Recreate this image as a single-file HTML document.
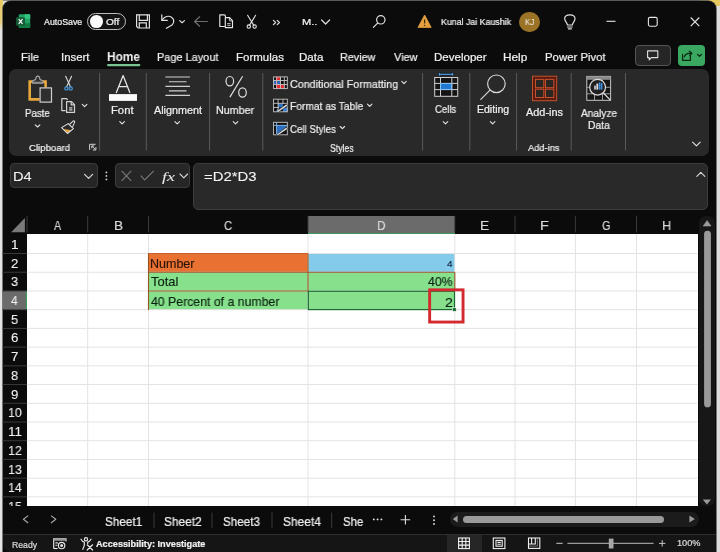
<!DOCTYPE html>
<html><head><meta charset="utf-8"><style>
html,body{margin:0;padding:0}
body{width:720px;height:552px;overflow:hidden;position:relative;background:#dedede;font-family:"Liberation Sans",sans-serif}
.a{position:absolute}
.t{position:absolute;white-space:nowrap;transform-origin:0 0;will-change:transform}
svg{position:absolute;overflow:visible}
</style></head><body>
<div class="a" style="left:0;top:0;width:720px;height:1px;background:#8a8a82"></div>
<div class="a" style="left:700px;top:0;width:20px;height:6px;background:#e8c860"></div>
<div class="a" style="left:0;top:0;width:2.5px;height:552px;background:linear-gradient(#e8c860 0px,#e8d080 22px,#e4e4e4 30px,#e4e4e4 552px)"></div>
<div class="a" style="left:2.5px;top:1px;width:713px;height:570px;background:#0b0b0b;border-radius:8px;box-shadow:0 0 0 0.7px #4a4a4a"></div>
<!-- ribbon panel -->
<div class="a" style="left:9px;top:68.5px;width:699.5px;height:87px;background:#292929;border-radius:7px"></div>
<!-- toggle -->
<div class="a" style="left:87.3px;top:13.1px;width:38.7px;height:17px;box-sizing:border-box;border:1.3px solid #bdbdbd;border-radius:9px;background:#141414"></div>
<div class="a" style="left:90px;top:15.1px;width:12.6px;height:12.6px;border-radius:50%;background:#fafafa"></div>
<!-- avatar -->
<div class="a" style="left:519.3px;top:11.6px;width:20.8px;height:20.8px;border-radius:50%;background:#9b7326"></div>
<!-- comment & share buttons -->
<div class="a" style="left:635px;top:45.2px;width:35.8px;height:20.6px;box-sizing:border-box;border:1px solid #555;border-radius:4px;background:#262626"></div>
<div class="a" style="left:678px;top:45.1px;width:27.3px;height:20.7px;border-radius:4px;background:#3aa860"></div>
<!-- formula bar -->
<div class="a" style="left:9.5px;top:163.3px;width:88.3px;height:24.5px;background:#262626;border:1px solid #3c3c3c;border-radius:4px;box-sizing:border-box"></div>
<div class="a" style="left:115.3px;top:163.3px;width:74.5px;height:24.5px;background:#262626;border:1px solid #3c3c3c;border-radius:4px;box-sizing:border-box"></div>
<div class="a" style="left:193.2px;top:163.4px;width:515px;height:46.2px;background:#292929;border:1px solid #3c3c3c;border-radius:5px;box-sizing:border-box"></div>
<!-- grid -->
<div class="a" style="left:699.4px;top:216px;width:15.2px;height:290px;background:#171717;border-radius:7px"></div>
<div class="a" style="left:27px;top:234px;width:670.6px;height:272px;background:#fff"></div>
<!-- column header selected -->
<div class="a" style="left:308px;top:215.8px;width:146.8px;height:18.4px;background:#6b6b6b"></div>
<div class="a" style="left:2.5px;top:290.96px;width:24.50px;height:18.72px;background:#6b6b6b"></div>
<div class="a" style="left:148.5px;top:253.52px;width:159.50px;height:18.72px;background:#E97132"></div>
<div class="a" style="left:308px;top:253.52px;width:146.80px;height:18.72px;background:#83CAEB"></div>
<div class="a" style="left:148.5px;top:272.24px;width:306.30px;height:37.44px;background:#86E08C"></div>

<!-- sheet bar & status bar -->
<div class="a" style="left:2.5px;top:506.1px;width:713px;height:28.1px;background:#0b0b0b"></div>
<div class="a" style="left:2.5px;top:534.2px;width:713px;height:18px;background:#151515;border-top:1px solid #2e2e2e;box-sizing:border-box;border-bottom-left-radius:8px"></div>
<div class="a" style="left:447px;top:535px;width:34.8px;height:17px;background:#262626"></div>
<div class="a" style="left:449.7px;top:511.7px;width:249px;height:15.5px;border-radius:8px;background:#1b1b1b"></div>
<div class="a" style="left:462.6px;top:515.5px;width:201.9px;height:7.1px;border-radius:3.6px;background:#9a9a9a"></div>
<svg width="720" height="552" style="left:0;top:0" viewBox="0 0 720 552">
<!-- excel icon -->
<rect x="18.7" y="14.3" width="11.5" height="13.6" rx="1.3" fill="#21a366"/>
<rect x="24.5" y="14.3" width="5.7" height="4.5" fill="#33c481"/>
<rect x="18.7" y="23.2" width="11.5" height="4.7" rx="1" fill="#107c41"/>
<rect x="16.1" y="17.2" width="8.9" height="8.6" rx="1" fill="#185c37"/>
<path d="M18.7 19.2 L22.5 23.8 M22.5 19.2 L18.7 23.8" stroke="#fff" stroke-width="1.2"/>
<!-- save -->
<g fill="none" stroke="#e0e0e0" stroke-width="1.2">
<path d="M136.6 14.8 H149.4 V28 H138.2 L136.6 26.4 Z"/>
<path d="M139.3 14.8 V20.3 H147.4 V14.8"/>
<path d="M139.3 28 V22.8 H146.3 V28"/>
</g>
<!-- undo -->
<g fill="none" stroke="#e0e0e0" stroke-width="1.2" stroke-linecap="round" stroke-linejoin="round">
<path d="M161.8 14.9 V20.4 H167.3"/>
<path d="M162.2 20 C164.5 16.5 168.5 15.2 171.5 17.2 C174.5 19.5 174.3 22.8 172 25 L166.4 28.3"/>
<path d="M179.7 20.6 L182.1 22.7 L184.5 20.6"/>
</g>
<!-- back arrow -->
<path d="M194.6 21.5 H207.4 M199.6 16.8 L194.6 21.5 L199.6 26.2" fill="none" stroke="#6e6e6e" stroke-width="1.2" stroke-linecap="round" stroke-linejoin="round"/>
<!-- copy -->
<g fill="none" stroke="#e6e6e6" stroke-width="1.15" stroke-linejoin="round">
<path d="M224.9 26.5 H219.8 V14.9 H224.2 C225 14.9 225.4 15.4 225.4 16.2 V17"/>
<path d="M225.3 17.6 H229.6 L232.5 20.6 V27.6 H225.3 Z"/>
<path d="M229.4 17.8 V20.3 C229.4 20.7 229.7 20.9 230.1 20.9 H232.3" stroke-width="0.9"/>
</g>
<path d="M227.2 23.6 H230.6 M227.2 25.3 H230.6" stroke="#e6e6e6" stroke-width="0.85"/>
<!-- scissors -->
<g fill="none" stroke="#e0e0e0" stroke-width="1.1" stroke-linecap="round">
<path d="M247.6 15.3 L253.8 25.4 M255.6 15.3 L249.4 25.4"/>
<circle cx="248.8" cy="26.6" r="1.7"/><circle cx="254.6" cy="26.6" r="1.7"/>
</g>
<!-- >> -->
<path d="M273.4 20.4 L275.6 22.5 L273.4 24.6 M277.2 20.4 L279.4 22.5 L277.2 24.6" fill="none" stroke="#e0e0e0" stroke-width="1.2" stroke-linecap="round" stroke-linejoin="round"/>
<!-- M.. chevron -->
<path d="M321.6 20 L325.6 24 L329.6 20" fill="none" stroke="#e0e0e0" stroke-width="1.2" stroke-linecap="round" stroke-linejoin="round"/>
<!-- search -->
<g fill="none" stroke="#e0e0e0" stroke-width="1.2" stroke-linecap="round">
<circle cx="380.8" cy="19.8" r="4.2"/>
<path d="M377.8 22.9 L373.4 27.3"/>
</g>
<!-- warning -->
<path d="M424.6 15 L431.2 27.4 H418 Z" fill="#e5a03d" stroke="#e5a03d" stroke-width="0.8" stroke-linejoin="round"/>
<path d="M424.6 19.4 V23.6" stroke="#3a2a10" stroke-width="1.2"/>
<circle cx="424.6" cy="25.4" r="0.7" fill="#3a2a10"/>
<!-- bulb -->
<g fill="none" stroke="#e0e0e0" stroke-width="1.2" stroke-linecap="round">
<path d="M567.4 25 C567.4 22.6 564.7 21.5 564.7 18.8 C564.7 16.4 566.9 14.9 569.9 14.9 C572.9 14.9 575 16.4 575 18.8 C575 21.5 572.4 22.6 572.4 25 Z"/>
<path d="M567.6 27 H572.2 M568.4 28.8 H571.4"/>
</g>
<!-- minimize / maximize / close -->
<path d="M606.5 21.3 H615.5" stroke="#e6e6e6" stroke-width="1.1"/>
<rect x="648.4" y="17.4" width="8.8" height="8.8" rx="1.6" fill="none" stroke="#e6e6e6" stroke-width="1.1"/>
<path d="M690.7 17.5 L699.3 26.1 M699.3 17.5 L690.7 26.1" stroke="#e6e6e6" stroke-width="1.1"/>
<!-- home underline -->
<rect x="107" y="63.9" width="33.4" height="2.3" rx="1.1" fill="#7cc394"/>
<!-- comment icon -->
<path d="M647.6 50.9 H657.8 V57.6 H651.4 L649.2 59.8 V57.6 H647.6 Z" fill="none" stroke="#e0e0e0" stroke-width="1.1" stroke-linejoin="round"/>
<!-- share icon -->
<g fill="none" stroke="#082812" stroke-width="1.25" stroke-linejoin="round" stroke-linecap="round">
<path d="M682.6 54.4 V60.3 H690.4 V55.8"/>
<path d="M684.4 56.8 C685.1 54.6 686.8 53.4 689.2 53.3 H691.5"/>
<path d="M689.3 51.2 L691.8 53.3 L689.7 55.5"/>
<path d="M697.6 54.5 L699.5 56.4 L701.4 54.5"/>
</g>


<!-- ===== formula bar ===== -->
<path d="M84.6 174.3 L88.6 178.3 L92.6 174.3" fill="none" stroke="#d8d8d8" stroke-width="1.2" stroke-linecap="round" stroke-linejoin="round"/>
<circle cx="106.4" cy="172.4" r="0.9" fill="#d8d8d8"/><circle cx="106.4" cy="175.9" r="0.9" fill="#d8d8d8"/><circle cx="106.4" cy="179.4" r="0.9" fill="#d8d8d8"/>
<path d="M121.6 170.8 L131.2 180.8 M131.2 170.8 L121.6 180.8" stroke="#7a7a7a" stroke-width="1.1"/>
<path d="M140.8 175.6 L144.6 180 L153.8 170.8" fill="none" stroke="#7a7a7a" stroke-width="1.1"/>
<path d="M180 174 L183.8 177.8 L187.6 174" fill="none" stroke="#d8d8d8" stroke-width="1.1" stroke-linecap="round" stroke-linejoin="round"/>
<path d="M696.8 176.4 L700.8 172.4 L704.8 176.4" fill="none" stroke="#d8d8d8" stroke-width="1.1" stroke-linecap="round" stroke-linejoin="round"/>
<!-- corner triangle -->
<path d="M11.1 232.2 L24.9 218 V232.2 Z" fill="#7a7a7a"/>
<!-- selected header green lines -->
<path d="M308 233.5 H454.8" stroke="#3d9a5c" stroke-width="1.2"/>
<path d="M26.4 290.96 V309.68" stroke="#3d9a5c" stroke-width="1.2"/>
<path d="M27 253.52 H697.6 M27 272.24 H697.6 M27 290.96 H697.6 M27 309.68 H697.6 M27 328.40 H697.6 M27 347.12 H697.6 M27 365.84 H697.6 M27 384.56 H697.6 M27 403.28 H697.6 M27 422.00 H697.6 M27 440.72 H697.6 M27 459.44 H697.6 M27 478.16 H697.6 M27 496.88 H697.6 M87.7 234 V506 M148.5 234 V506 M308 234 V506 M454.8 234 V506 M515 234 V506 M575.4 234 V506 M636.5 234 V506" stroke="#e3e3e3" stroke-width="1"/>
<path d="M27 215.8 V232.4 M87.7 215.8 V232.4 M148.5 215.8 V232.4 M308 215.8 V232.4 M454.8 215.8 V232.4 M515 215.8 V232.4 M575.4 215.8 V232.4 M636.5 215.8 V232.4 M2.5 253.52 H27 M2.5 272.24 H27 M2.5 290.96 H27 M2.5 309.68 H27 M2.5 328.40 H27 M2.5 347.12 H27 M2.5 365.84 H27 M2.5 384.56 H27 M2.5 403.28 H27 M2.5 422.00 H27 M2.5 440.72 H27 M2.5 459.44 H27 M2.5 478.16 H27 M2.5 496.88 H27" stroke="#3a3a3a" stroke-width="1"/>
<!-- cell borders -->
<path d="M148 253.52 H308" stroke="#c9622c" stroke-width="1.1"/>
<path d="M148.5 253.52 V310.08 M148.5 272.24 H454.8 M148.5 290.96 H308 M308 253.52 V290.96 M454.8 272.24 V290.96" fill="none" stroke="#94561e" stroke-width="1.1"/>
<rect x="308.3" y="291.26" width="146.2" height="18.32" fill="none" stroke="#1c6b33" stroke-width="1.2"/>
<rect x="452.6" y="307.78" width="3.6" height="3.6" fill="#1c6b33" stroke="#fff" stroke-width="0.6"/>
<!-- red annotation box -->
<rect x="429.65" y="289.85" width="33.4" height="32.2" fill="none" stroke="#d22a2e" stroke-width="2.9"/>
<!-- scrollbar vertical -->
<path d="M703.2 226 L707.1 220.6 L711 226 Z" fill="#9a9a9a" stroke="#9a9a9a" stroke-width="0.6" stroke-linejoin="round"/>
<rect x="704.1" y="230.8" width="6.8" height="176.5" rx="3.4" fill="#9a9a9a"/>
<path d="M702.8 499.6 L706.9 504.5 L711 499.6 Z" fill="#9a9a9a"/>


<!-- ===== sheet bar ===== -->
<path d="M28.2 515.6 L23.4 519.3 L28.2 523 M51 515.6 L55.8 519.3 L51 523" fill="none" stroke="#a8a8a8" stroke-width="1.1" stroke-linejoin="round"/>
<path d="M154 512.5 V527.8 M212 512.5 V527.8 M272 512.5 V527.8 M331.7 512.5 V527.8" stroke="#3a3a3a" stroke-width="1"/>
<circle cx="373.8" cy="519.4" r="0.95" fill="#e6e6e6"/><circle cx="377.6" cy="519.4" r="0.95" fill="#e6e6e6"/><circle cx="381.4" cy="519.4" r="0.95" fill="#e6e6e6"/>
<path d="M405.4 515 V524.4 M400.6 519.7 H410.2" stroke="#e0e0e0" stroke-width="1.1"/>
<circle cx="434" cy="516.4" r="0.95" fill="#e0e0e0"/><circle cx="434" cy="520.2" r="0.95" fill="#e0e0e0"/><circle cx="434" cy="524" r="0.95" fill="#e0e0e0"/>
<path d="M457.6 515.6 L452.8 519.1 L457.6 522.6 Z M689.4 515.6 L694.8 519.1 L689.4 522.6 Z" fill="#9a9a9a"/>
<!-- ===== status bar ===== -->
<g fill="none" stroke="#e8e8e8" stroke-width="1.15">
<path d="M53.7 548.5 V538.8 H66 V541.4"/>
<path d="M53.7 548.5 H57.6"/>
<path d="M55.4 542.8 H57.8 M55.4 545.2 H57.4"/>
<circle cx="61.6" cy="545.5" r="3.2"/>
</g>
<rect x="53.6" y="538.6" width="12.4" height="2.2" fill="#9a9a9a"/>
<circle cx="61.6" cy="545.6" r="1.5" fill="#e0e0e0"/>
<g fill="none" stroke="#e8e8e8" stroke-width="1.2" stroke-linecap="round" stroke-linejoin="round">
<circle cx="86" cy="539.3" r="1.6"/>
<path d="M81 539.2 C82 541 83 541.8 84.3 542 L84.3 545.4 L82.8 549.4 M91 539.2 C90 541 89 541.8 87.7 542 L87.7 543.4"/>
<path d="M87.2 544.8 L92.6 550 M92.6 544.8 L87.2 550"/>
</g>
<g fill="none" stroke="#f0f0f0" stroke-width="1.1">
<rect x="458.6" y="538" width="10.8" height="10.6"/>
<path d="M462.2 538 V548.6 M465.8 538 V548.6 M458.6 541.5 H469.4 M458.6 545.1 H469.4"/>
<rect x="493.3" y="538" width="11.6" height="10.6"/>
<rect x="496" y="540.4" width="6.2" height="5.8"/>
<path d="M497.4 542.4 H500.8 M497.4 544.2 H500.8"/>
<rect x="528.5" y="538" width="11.3" height="10.4"/>
<path d="M531.6 538 V544 M535.3 538 V544 H528.5"/>
<path d="M529 546.1 H537.4 V538.4" stroke-width="0.7" stroke="#9a9a9a"/>
</g>
<path d="M556.3 543.3 H562.7" stroke="#c8c8c8" stroke-width="1"/>
<path d="M567.4 543.3 H653.6" stroke="#9a9a9a" stroke-width="1.2"/>
<rect x="608.8" y="538.6" width="4.7" height="9.9" fill="#a8a8a8"/>
<path d="M659 543.4 H665.4 M662.2 540.2 V546.6" stroke="#c8c8c8" stroke-width="1"/>

<!-- ===== ribbon icons ===== -->
<g stroke="#5a5a5a" stroke-width="1">
<path d="M99.6 73 V150.5 M146.3 73 V150.5 M209.6 73 V150.5 M262.8 73 V150.5 M422.6 73 V150.5 M469.8 73 V150.5 M516.6 73 V150.5 M571.2 73 V150.5 M625.5 73 V150.5"/>
</g>
<!-- paste -->
<path d="M39.6 99.4 H29.7 V81.6 H45.6 V87.4" fill="none" stroke="#e6a83e" stroke-width="2.6"/>
<path d="M32.6 83.2 V81 C33.4 80.2 34.8 79.8 35.6 79.6 C35.8 77 36.6 76.1 37.8 76.1 C39 76.1 39.8 77 40 79.6 C40.8 79.8 42.2 80.2 43 81 V83.2 Z" fill="#2b2b2b" stroke="#a8a8a8" stroke-width="1.1" stroke-linejoin="round"/>
<rect x="32.6" y="81.6" width="10.4" height="1.8" fill="#8a8a8a"/>
<rect x="40.1" y="87.9" width="11.4" height="14.2" fill="#2e2e2e" stroke="#cfcfcf" stroke-width="1.2"/>
<g fill="none" stroke="#e6e6e6" stroke-width="1.1" stroke-linecap="round" stroke-linejoin="round">
<path d="M35.3 124.8 L37.6 127 L39.9 124.8"/>
<path d="M82.3 104.4 L84.6 106.6 L86.9 104.4"/>
<path d="M119.8 121.7 L122.1 123.9 L124.4 121.7"/>
<path d="M174.9 121.7 L177.2 123.9 L179.5 121.7"/>
<path d="M233.2 121.7 L235.5 123.9 L237.8 121.7"/>
<path d="M443.2 121.7 L445.5 123.9 L447.8 121.7"/>
<path d="M490.3 121.7 L492.6 123.9 L494.9 121.7"/>
<path d="M401.8 81.4 L404 83.6 L406.2 81.4"/>
<path d="M367.5 104.1 L369.7 106.3 L371.9 104.1"/>
<path d="M340.2 126.5 L342.4 128.7 L344.6 126.5"/>
<path d="M692.6 142.2 L696.4 145.8 L700.2 142.2"/>
</g>
<!-- scissors blue -->
<g fill="none" stroke="#dcdcdc" stroke-width="1.1" stroke-linecap="round">
<path d="M65.6 76.2 L70.4 86.4 M71.6 76.2 L66.8 86.4"/>
</g>
<g fill="none" stroke="#4a9be0" stroke-width="1.2">
<circle cx="66.4" cy="88.4" r="1.6"/><circle cx="70.7" cy="88.4" r="1.6"/>
</g>
<!-- copy -->
<g fill="none" stroke="#d2d2d2" stroke-width="1.2" stroke-linejoin="round">
<path d="M65.6 110.6 H61.8 V98.6 H66.6 L67.6 100"/>
<path d="M66.6 101.7 H71.6 L74.5 104.6 V112.4 H66.6 Z"/>
<path d="M71.2 101.9 V104.9 H74.3"/>
<path d="M69.1 107.8 H72.4 M69.1 109.8 H72.4"/>
</g>
<!-- format painter -->
<path d="M63.4 128.9 L70.6 129.9 L67.4 133.2 Z" fill="#e8a23c"/>
<path d="M61.6 127.6 L68.2 123.6 L73.4 128.6 L67.4 133.5 Z" fill="none" stroke="#e8e8e8" stroke-width="1.05" stroke-linejoin="round"/>
<path d="M69.4 124.6 L73 121.2 C73.8 120.5 75 121.1 74.7 122.1 L72.4 127.4" fill="none" stroke="#e0e0e0" stroke-width="1.05" stroke-linejoin="round"/>
<!-- dialog launcher -->
<g fill="none" stroke="#cfcfcf" stroke-width="1">
<path d="M89.6 149.9 V144.3 H95.6 M95.9 150 V147 M95.9 150 H92.8 M95.5 149.6 L91.8 145.9 M91.8 148.3 V145.9 H94.2"/>
</g>
<!-- font A -->
<path d="M116.2 93 L123.1 75.6 L130 93 M119.3 86.7 H126.9" fill="none" stroke="#e8e8e8" stroke-width="1.25" stroke-linejoin="round"/>
<rect x="109" y="94.1" width="28" height="6.8" fill="#fafafa"/>
<!-- alignment -->
<g stroke="#cfcfcf" stroke-width="1.15">
<path d="M165.4 77 H190 M168.9 81.7 H186.5 M165.4 86.3 H190 M168.9 90.9 H186.5 M165.4 95.4 H190"/>
</g>
<!-- percent -->
<g fill="none" stroke="#e0e0e0" stroke-width="1.2">
<ellipse cx="229.8" cy="81.2" rx="3.8" ry="4.7"/>
<ellipse cx="242.5" cy="92.5" rx="3.8" ry="4.7"/>
<path d="M242.6 76.3 L229.9 97.1"/>
</g>
<!-- conditional formatting -->
<rect x="273.6" y="76.9" width="13.7" height="11.7" fill="#111"/>
<rect x="276.6" y="76.9" width="4" height="3.5" fill="#e02a2a"/>
<rect x="276.6" y="84.5" width="7.7" height="4.1" fill="#e02a2a"/>
<rect x="273.6" y="80.5" width="7" height="4" fill="#2766b8"/>
<g fill="none" stroke="#c8c8c8" stroke-width="0.9">
<rect x="273.6" y="76.9" width="13.7" height="11.7"/>
<path d="M276.6 76.9 V88.6 M280.5 76.9 V88.6 M284.3 76.9 V88.6 M273.6 80.5 H287.3 M273.6 84.5 H287.3"/>
</g>
<path d="M276.6 76.9 V88.6" stroke="#ff8a8a" stroke-width="0.6"/>
<!-- format as table -->
<rect x="273.6" y="99.2" width="13.7" height="12.6" fill="#111"/>
<rect x="278.1" y="103.3" width="4.9" height="4.2" fill="#2c6fc0"/>
<rect x="283" y="107.5" width="4.3" height="4.3" fill="#3a80d0"/>
<g fill="none" stroke="#c8c8c8" stroke-width="0.9">
<rect x="273.6" y="99.2" width="13.7" height="12.6"/>
<path d="M278.1 99.2 V111.8 M283 99.2 V104 M273.6 103.3 H287.3 M273.6 107.5 H279"/>
</g>
<path d="M276.2 111.6 L286.4 104 L287.6 105.8 L277.8 112.6 Z" fill="#e0e0e0" stroke="#0a0a0a" stroke-width="0.5"/>
<path d="M276.2 111.6 L278.6 108.8" stroke="#8cc8f8" stroke-width="0.9"/>
<!-- cell styles -->
<rect x="273.6" y="122.3" width="13.7" height="12.5" fill="#111"/>
<path d="M276.6 125.4 H286.6 V126.8 L277.6 134.2 H276.6 Z" fill="#2c6fc0"/>
<g fill="none" stroke="#c8c8c8" stroke-width="0.9">
<rect x="273.6" y="122.3" width="13.7" height="12.5"/>
</g>
<path d="M276.6 122.3 V134.8 M273.6 125.4 H287.3" stroke="#8cc0f0" stroke-width="0.9"/>
<path d="M276.4 134.6 L286.4 127.2 L287.6 129 L277.8 135.6 Z" fill="#e0e0e0" stroke="#0a0a0a" stroke-width="0.5"/>
<!-- cells -->
<rect x="437.8" y="72.2" width="16.4" height="4.2" fill="#1c2630"/>
<path d="M439.4 74.3 H452.6 M439.4 73 V75.6 M452.6 73 V75.6" stroke="#5aa7ef" stroke-width="1"/>
<rect x="434.7" y="77.5" width="23" height="18.8" fill="#141414"/>
<rect x="440.5" y="83.4" width="11.3" height="6.2" fill="#1f78d1"/>
<g fill="none" stroke="#d0d0d0" stroke-width="1">
<rect x="434.7" y="77.5" width="23" height="18.8"/>
<path d="M440.5 77.5 V96.3 M451.8 77.5 V96.3 M434.7 83.4 H457.7 M434.7 89.6 H457.7"/>
</g>
<rect x="440.5" y="83.4" width="11.3" height="6.2" fill="none" stroke="#7cc0ff" stroke-width="0.8"/>
<!-- editing magnifier -->
<g fill="none" stroke="#d6d6d6" stroke-width="1.2" stroke-linecap="round">
<circle cx="496.4" cy="83.8" r="8.8"/>
<path d="M490 90.2 L480.8 99.4"/>
</g>
<!-- add-ins -->
<rect x="532.5" y="76.2" width="24.2" height="24.5" fill="#5a1c10" stroke="#c4512c" stroke-width="1"/>
<g fill="#2a2624" stroke="#c4512c" stroke-width="1">
<rect x="535.5" y="79.4" width="8.3" height="8.3"/>
<rect x="545.5" y="79.4" width="8.3" height="8.3"/>
<rect x="535.5" y="89.2" width="8.3" height="8.3"/>
<rect x="545.5" y="89.2" width="8.3" height="8.3"/>
</g>
<!-- analyze data -->
<g>
<rect x="586.8" y="76.4" width="23.8" height="23.9" fill="#161616" stroke="#c8c8c8" stroke-width="1"/>
<rect x="586.8" y="76.4" width="23.8" height="3.4" fill="#8a8a8a"/>
<path d="M594.5 79.8 V100.3 M602.5 79.8 V100.3 M586.8 87.3 H610.6 M586.8 93.8 H610.6" stroke="#a8a8a8" stroke-width="0.9"/>
<circle cx="597.6" cy="87.2" r="7.9" fill="#202020" stroke="#dcdcdc" stroke-width="1.2"/>
<path d="M603.4 93 L610.4 100.2" stroke="#dcdcdc" stroke-width="1.2"/>
<rect x="594.2" y="85.6" width="1.6" height="4" fill="#d0d0d0"/>
<rect x="596.4" y="83.6" width="1.8" height="6" fill="#e0e0e0"/>
<rect x="598.8" y="82.4" width="1.6" height="7.2" fill="#3d8fe0"/>
<rect x="600.8" y="83" width="1.6" height="6.6" fill="#3d8fe0"/>
</g>
</svg>
<div class="t" style="left:44.00px;top:19.23px;font-size:8.18px;line-height:8.18px;color:#f0f0f0;font-weight:normal;font-style:normal;font-family:'Liberation Sans';transform:scaleX(1.0791);-webkit-text-stroke:0.22px currentColor">AutoSave</div>
<div class="t" style="left:106.07px;top:19.03px;font-size:8.18px;line-height:8.18px;color:#f0f0f0;font-weight:normal;font-style:normal;font-family:'Liberation Sans';transform:scaleX(1.2360);-webkit-text-stroke:0.22px currentColor">Off</div>
<div class="t" style="left:301.59px;top:18.38px;font-size:8.53px;line-height:8.53px;color:#f0f0f0;font-weight:normal;font-style:normal;font-family:'Liberation Sans';transform:scaleX(1.3012);-webkit-text-stroke:0.22px currentColor">M..</div>
<div class="t" style="left:440.79px;top:18.47px;font-size:9.25px;line-height:9.25px;color:#f0f0f0;font-weight:normal;font-style:normal;font-family:'Liberation Sans';transform:scaleX(0.9519);-webkit-text-stroke:0.22px currentColor">Kunal Jai Kaushik</div>
<div class="t" style="left:20.82px;top:51.57px;font-size:11.38px;line-height:11.38px;color:#f0f0f0;font-weight:normal;font-style:normal;font-family:'Liberation Sans';transform:scaleX(0.9789);-webkit-text-stroke:0.22px currentColor">File</div>
<div class="t" style="left:61.16px;top:51.57px;font-size:11.38px;line-height:11.38px;color:#f0f0f0;font-weight:normal;font-style:normal;font-family:'Liberation Sans';transform:scaleX(0.9873);-webkit-text-stroke:0.22px currentColor">Insert</div>
<div class="t" style="left:156.63px;top:51.57px;font-size:11.38px;line-height:11.38px;color:#f0f0f0;font-weight:normal;font-style:normal;font-family:'Liberation Sans';transform:scaleX(0.9612);-webkit-text-stroke:0.22px currentColor">Page Layout</div>
<div class="t" style="left:236.09px;top:51.57px;font-size:11.38px;line-height:11.38px;color:#f0f0f0;font-weight:normal;font-style:normal;font-family:'Liberation Sans';transform:scaleX(1.0101);-webkit-text-stroke:0.22px currentColor">Formulas</div>
<div class="t" style="left:299.08px;top:51.57px;font-size:11.38px;line-height:11.38px;color:#f0f0f0;font-weight:normal;font-style:normal;font-family:'Liberation Sans';transform:scaleX(1.0191);-webkit-text-stroke:0.22px currentColor">Data</div>
<div class="t" style="left:340.05px;top:51.57px;font-size:11.38px;line-height:11.38px;color:#f0f0f0;font-weight:normal;font-style:normal;font-family:'Liberation Sans';transform:scaleX(0.9494);-webkit-text-stroke:0.22px currentColor">Review</div>
<div class="t" style="left:393.55px;top:51.57px;font-size:11.38px;line-height:11.38px;color:#f0f0f0;font-weight:normal;font-style:normal;font-family:'Liberation Sans';transform:scaleX(0.9574);-webkit-text-stroke:0.22px currentColor">View</div>
<div class="t" style="left:433.79px;top:51.57px;font-size:11.38px;line-height:11.38px;color:#f0f0f0;font-weight:normal;font-style:normal;font-family:'Liberation Sans';transform:scaleX(1.0151);-webkit-text-stroke:0.22px currentColor">Developer</div>
<div class="t" style="left:503.47px;top:51.57px;font-size:11.38px;line-height:11.38px;color:#f0f0f0;font-weight:normal;font-style:normal;font-family:'Liberation Sans';transform:scaleX(1.0374);-webkit-text-stroke:0.22px currentColor">Help</div>
<div class="t" style="left:545.40px;top:51.57px;font-size:11.38px;line-height:11.38px;color:#f0f0f0;font-weight:normal;font-style:normal;font-family:'Liberation Sans';transform:scaleX(0.9974);-webkit-text-stroke:0.22px currentColor">Power Pivot</div>
<div class="t" style="left:106.83px;top:50.82px;font-size:12.38px;line-height:12.38px;color:#f2f2f2;font-weight:bold;font-style:normal;font-family:'Liberation Sans';transform:scaleX(0.9576);-webkit-text-stroke:0px currentColor">Home</div>
<div class="t" style="left:25.33px;top:108.05px;font-size:10.81px;line-height:10.81px;color:#f0f0f0;font-weight:normal;font-style:normal;font-family:'Liberation Sans';transform:scaleX(0.9001);-webkit-text-stroke:0.22px currentColor">Paste</div>
<div class="t" style="left:28.55px;top:143.01px;font-size:9.67px;line-height:9.67px;color:#f0f0f0;font-weight:normal;font-style:normal;font-family:'Liberation Sans';transform:scaleX(0.9911);-webkit-text-stroke:0.22px currentColor">Clipboard</div>
<div class="t" style="left:111.31px;top:105.25px;font-size:10.81px;line-height:10.81px;color:#f0f0f0;font-weight:normal;font-style:normal;font-family:'Liberation Sans';transform:scaleX(1.0422);-webkit-text-stroke:0.22px currentColor">Font</div>
<div class="t" style="left:153.80px;top:105.25px;font-size:10.81px;line-height:10.81px;color:#f0f0f0;font-weight:normal;font-style:normal;font-family:'Liberation Sans';transform:scaleX(0.9997);-webkit-text-stroke:0.22px currentColor">Alignment</div>
<div class="t" style="left:216.46px;top:105.25px;font-size:10.81px;line-height:10.81px;color:#f0f0f0;font-weight:normal;font-style:normal;font-family:'Liberation Sans';transform:scaleX(0.9908);-webkit-text-stroke:0.22px currentColor">Number</div>
<div class="t" style="left:290.17px;top:78.60px;font-size:11.1px;line-height:11.1px;color:#f0f0f0;font-weight:normal;font-style:normal;font-family:'Liberation Sans';transform:scaleX(0.9688);-webkit-text-stroke:0.22px currentColor">Conditional Formatting</div>
<div class="t" style="left:289.90px;top:101.33px;font-size:10.95px;line-height:10.95px;color:#f0f0f0;font-weight:normal;font-style:normal;font-family:'Liberation Sans';transform:scaleX(0.9363);-webkit-text-stroke:0.22px currentColor">Format as Table</div>
<div class="t" style="left:290.25px;top:123.75px;font-size:10.81px;line-height:10.81px;color:#f0f0f0;font-weight:normal;font-style:normal;font-family:'Liberation Sans';transform:scaleX(0.9023);-webkit-text-stroke:0.22px currentColor">Cell Styles</div>
<div class="t" style="left:330.03px;top:142.89px;font-size:10.53px;line-height:10.53px;color:#f0f0f0;font-weight:normal;font-style:normal;font-family:'Liberation Sans';transform:scaleX(0.8220);-webkit-text-stroke:0.22px currentColor">Styles</div>
<div class="t" style="left:435.34px;top:105.41px;font-size:10.38px;line-height:10.38px;color:#f0f0f0;font-weight:normal;font-style:normal;font-family:'Liberation Sans';transform:scaleX(0.9222);-webkit-text-stroke:0.22px currentColor">Cells</div>
<div class="t" style="left:476.74px;top:105.41px;font-size:10.38px;line-height:10.38px;color:#f0f0f0;font-weight:normal;font-style:normal;font-family:'Liberation Sans';transform:scaleX(1.0144);-webkit-text-stroke:0.22px currentColor">Editing</div>
<div class="t" style="left:526.00px;top:107.37px;font-size:10.67px;line-height:10.67px;color:#f0f0f0;font-weight:normal;font-style:normal;font-family:'Liberation Sans';transform:scaleX(1.0226);-webkit-text-stroke:0.22px currentColor">Add-ins</div>
<div class="t" style="left:528.30px;top:143.49px;font-size:9.82px;line-height:9.82px;color:#f0f0f0;font-weight:normal;font-style:normal;font-family:'Liberation Sans';transform:scaleX(0.9459);-webkit-text-stroke:0.22px currentColor">Add-ins</div>
<div class="t" style="left:581.00px;top:107.57px;font-size:10.67px;line-height:10.67px;color:#f0f0f0;font-weight:normal;font-style:normal;font-family:'Liberation Sans';transform:scaleX(0.9514);-webkit-text-stroke:0.22px currentColor">Analyze</div>
<div class="t" style="left:587.56px;top:121.41px;font-size:10.38px;line-height:10.38px;color:#f0f0f0;font-weight:normal;font-style:normal;font-family:'Liberation Sans';transform:scaleX(0.9904);-webkit-text-stroke:0.22px currentColor">Data</div>
<div class="t" style="left:13.25px;top:170.18px;font-size:13.37px;line-height:13.37px;color:#f4f4f4;font-weight:normal;font-style:normal;font-family:'Liberation Sans';transform:scaleX(1.1010);-webkit-text-stroke:0.08px currentColor">D4</div>
<div class="t" style="left:203.90px;top:170.40px;font-size:13.23px;line-height:13.23px;color:#f4f4f4;font-weight:normal;font-style:normal;font-family:'Liberation Sans';transform:scaleX(1.1286);-webkit-text-stroke:0.08px currentColor">=D2*D3</div>
<div class="t" style="left:162.25px;top:170.10px;font-size:13px;line-height:13px;color:#e8e8e8;font-weight:normal;font-style:italic;font-family:'Liberation Serif';transform:scaleX(1.3711);-webkit-text-stroke:0.05px currentColor">fx</div>
<div class="t" style="left:53.85px;top:218.84px;font-size:13.66px;line-height:13.66px;color:#d8d8d8;font-weight:normal;font-style:normal;font-family:'Liberation Sans';transform:scaleX(0.7845);-webkit-text-stroke:0.22px currentColor">A</div>
<div class="t" style="left:113.82px;top:218.84px;font-size:13.66px;line-height:13.66px;color:#d8d8d8;font-weight:normal;font-style:normal;font-family:'Liberation Sans';transform:scaleX(0.9638);-webkit-text-stroke:0.22px currentColor">B</div>
<div class="t" style="left:224.07px;top:218.84px;font-size:13.66px;line-height:13.66px;color:#d8d8d8;font-weight:normal;font-style:normal;font-family:'Liberation Sans';transform:scaleX(0.8228);-webkit-text-stroke:0.22px currentColor">C</div>
<div class="t" style="left:377.08px;top:218.84px;font-size:13.66px;line-height:13.66px;color:#d8d8d8;font-weight:normal;font-style:normal;font-family:'Liberation Sans';transform:scaleX(0.8650);-webkit-text-stroke:0.22px currentColor">D</div>
<div class="t" style="left:480.37px;top:218.84px;font-size:13.66px;line-height:13.66px;color:#d8d8d8;font-weight:normal;font-style:normal;font-family:'Liberation Sans';transform:scaleX(0.9638);-webkit-text-stroke:0.22px currentColor">E</div>
<div class="t" style="left:540.48px;top:218.84px;font-size:13.66px;line-height:13.66px;color:#d8d8d8;font-weight:normal;font-style:normal;font-family:'Liberation Sans';transform:scaleX(1.0542);-webkit-text-stroke:0.22px currentColor">F</div>
<div class="t" style="left:601.89px;top:218.84px;font-size:13.66px;line-height:13.66px;color:#d8d8d8;font-weight:normal;font-style:normal;font-family:'Liberation Sans';transform:scaleX(0.8032);-webkit-text-stroke:0.22px currentColor">G</div>
<div class="t" style="left:662.40px;top:218.84px;font-size:13.66px;line-height:13.66px;color:#d8d8d8;font-weight:normal;font-style:normal;font-family:'Liberation Sans';transform:scaleX(0.9370);-webkit-text-stroke:0.22px currentColor">H</div>
<div class="t" style="left:10.79px;top:237.88px;font-size:13.37px;line-height:13.37px;color:#f0f0f0;font-weight:normal;font-style:normal;font-family:'Liberation Sans';transform:scaleX(1.0234);-webkit-text-stroke:0.1px currentColor">1</div>
<div class="t" style="left:11.03px;top:256.60px;font-size:13.37px;line-height:13.37px;color:#f0f0f0;font-weight:normal;font-style:normal;font-family:'Liberation Sans';transform:scaleX(0.9893);-webkit-text-stroke:0.1px currentColor">2</div>
<div class="t" style="left:11.25px;top:275.32px;font-size:13.37px;line-height:13.37px;color:#f0f0f0;font-weight:normal;font-style:normal;font-family:'Liberation Sans';transform:scaleX(0.9574);-webkit-text-stroke:0.1px currentColor">3</div>
<div class="t" style="left:11.46px;top:294.04px;font-size:13.37px;line-height:13.37px;color:#f0f0f0;font-weight:normal;font-style:normal;font-family:'Liberation Sans';transform:scaleX(0.8993);-webkit-text-stroke:0.1px currentColor">4</div>
<div class="t" style="left:11.25px;top:312.76px;font-size:13.37px;line-height:13.37px;color:#f0f0f0;font-weight:normal;font-style:normal;font-family:'Liberation Sans';transform:scaleX(0.9574);-webkit-text-stroke:0.1px currentColor">5</div>
<div class="t" style="left:11.03px;top:331.48px;font-size:13.37px;line-height:13.37px;color:#f0f0f0;font-weight:normal;font-style:normal;font-family:'Liberation Sans';transform:scaleX(0.9893);-webkit-text-stroke:0.1px currentColor">6</div>
<div class="t" style="left:11.03px;top:350.20px;font-size:13.37px;line-height:13.37px;color:#f0f0f0;font-weight:normal;font-style:normal;font-family:'Liberation Sans';transform:scaleX(0.9893);-webkit-text-stroke:0.1px currentColor">7</div>
<div class="t" style="left:11.25px;top:368.92px;font-size:13.37px;line-height:13.37px;color:#f0f0f0;font-weight:normal;font-style:normal;font-family:'Liberation Sans';transform:scaleX(0.9574);-webkit-text-stroke:0.1px currentColor">8</div>
<div class="t" style="left:11.03px;top:387.64px;font-size:13.37px;line-height:13.37px;color:#f0f0f0;font-weight:normal;font-style:normal;font-family:'Liberation Sans';transform:scaleX(0.9893);-webkit-text-stroke:0.1px currentColor">9</div>
<div class="t" style="left:7.68px;top:406.36px;font-size:13.37px;line-height:13.37px;color:#f0f0f0;font-weight:normal;font-style:normal;font-family:'Liberation Sans';transform:scaleX(0.9195);-webkit-text-stroke:0.1px currentColor">10</div>
<div class="t" style="left:7.61px;top:425.08px;font-size:13.37px;line-height:13.37px;color:#f0f0f0;font-weight:normal;font-style:normal;font-family:'Liberation Sans';transform:scaleX(1.0079);-webkit-text-stroke:0.1px currentColor">11</div>
<div class="t" style="left:7.67px;top:443.80px;font-size:13.37px;line-height:13.37px;color:#f0f0f0;font-weight:normal;font-style:normal;font-family:'Liberation Sans';transform:scaleX(0.9337);-webkit-text-stroke:0.1px currentColor">12</div>
<div class="t" style="left:7.67px;top:462.52px;font-size:13.37px;line-height:13.37px;color:#f0f0f0;font-weight:normal;font-style:normal;font-family:'Liberation Sans';transform:scaleX(0.9337);-webkit-text-stroke:0.1px currentColor">13</div>
<div class="t" style="left:7.68px;top:481.24px;font-size:13.37px;line-height:13.37px;color:#f0f0f0;font-weight:normal;font-style:normal;font-family:'Liberation Sans';transform:scaleX(0.9195);-webkit-text-stroke:0.1px currentColor">14</div>
<div class="t" style="left:7.67px;top:499.96px;font-size:13.37px;line-height:13.37px;color:#f0f0f0;font-weight:normal;font-style:normal;font-family:'Liberation Sans';transform:scaleX(0.9337);-webkit-text-stroke:0.1px currentColor">15</div>
<div class="t" style="left:150.42px;top:257.77px;font-size:12.09px;line-height:12.09px;color:#2a1408;font-weight:normal;font-style:normal;font-family:'Liberation Sans';transform:scaleX(1.0353);-webkit-text-stroke:0.15px currentColor">Number</div>
<div class="t" style="left:150.74px;top:276.08px;font-size:12.66px;line-height:12.66px;color:#0c2210;font-weight:normal;font-style:normal;font-family:'Liberation Sans';transform:scaleX(1.0223);-webkit-text-stroke:0.15px currentColor">Total</div>
<div class="t" style="left:150.66px;top:295.66px;font-size:12.8px;line-height:12.8px;color:#0c2210;font-weight:normal;font-style:normal;font-family:'Liberation Sans';transform:scaleX(0.9602);-webkit-text-stroke:0.15px currentColor">40 Percent of a number</div>
<div class="t" style="left:446.79px;top:259.97px;font-size:9.25px;line-height:9.25px;color:#1a2a4a;font-weight:normal;font-style:normal;font-family:'Liberation Sans';transform:scaleX(1.0638);-webkit-text-stroke:0.2px currentColor">4</div>
<div class="t" style="left:427.95px;top:276.32px;font-size:12.38px;line-height:12.38px;color:#0c2210;font-weight:normal;font-style:normal;font-family:'Liberation Sans';transform:scaleX(0.9867);-webkit-text-stroke:0.15px currentColor">40%</div>
<div class="t" style="left:444.80px;top:296.55px;font-size:12.23px;line-height:12.23px;color:#0c2210;font-weight:normal;font-style:normal;font-family:'Liberation Sans';transform:scaleX(1.1607);-webkit-text-stroke:0.15px currentColor">2</div>
<div class="t" style="left:525.39px;top:17.92px;font-size:8.96px;line-height:8.96px;color:#f4f4f4;font-weight:normal;font-style:normal;font-family:'Liberation Sans';transform:scaleX(0.8766);-webkit-text-stroke:0px currentColor">KJ</div>
<div class="a" style="left:2.5px;top:506.1px;width:40px;height:6px;background:#0b0b0b"></div>
<div class="t" style="left:105.48px;top:515.50px;font-size:12.52px;line-height:12.52px;color:#f0f0f0;font-weight:normal;font-style:normal;font-family:'Liberation Sans';transform:scaleX(0.9386);-webkit-text-stroke:0.22px currentColor">Sheet1</div>
<div class="t" style="left:163.88px;top:515.50px;font-size:12.52px;line-height:12.52px;color:#f0f0f0;font-weight:normal;font-style:normal;font-family:'Liberation Sans';transform:scaleX(0.9502);-webkit-text-stroke:0.22px currentColor">Sheet2</div>
<div class="t" style="left:223.49px;top:515.50px;font-size:12.52px;line-height:12.52px;color:#f0f0f0;font-weight:normal;font-style:normal;font-family:'Liberation Sans';transform:scaleX(0.9322);-webkit-text-stroke:0.22px currentColor">Sheet3</div>
<div class="t" style="left:283.48px;top:515.50px;font-size:12.52px;line-height:12.52px;color:#f0f0f0;font-weight:normal;font-style:normal;font-family:'Liberation Sans';transform:scaleX(0.9544);-webkit-text-stroke:0.22px currentColor">Sheet4</div>
<div class="t" style="left:343.10px;top:515.50px;font-size:12.52px;line-height:12.52px;color:#f0f0f0;font-weight:normal;font-style:normal;font-family:'Liberation Sans';transform:scaleX(0.9145);-webkit-text-stroke:0.22px currentColor">She</div>
<div class="t" style="left:12.09px;top:540.78px;font-size:8.53px;line-height:8.53px;color:#d8d8d8;font-weight:normal;font-style:normal;font-family:'Liberation Sans';transform:scaleX(1.0192);-webkit-text-stroke:0.22px currentColor">Ready</div>
<div class="t" style="left:95.79px;top:540.33px;font-size:8.82px;line-height:8.82px;color:#f0f0f0;font-weight:bold;font-style:normal;font-family:'Liberation Sans';transform:scaleX(1.0388);-webkit-text-stroke:0.22px currentColor">Accessibility: Investigate</div>
<div class="t" style="left:676.53px;top:540.42px;font-size:8.25px;line-height:8.25px;color:#d8d8d8;font-weight:normal;font-style:normal;font-family:'Liberation Sans';transform:scaleX(1.1130);-webkit-text-stroke:0.22px currentColor">100%</div>
</body></html>
